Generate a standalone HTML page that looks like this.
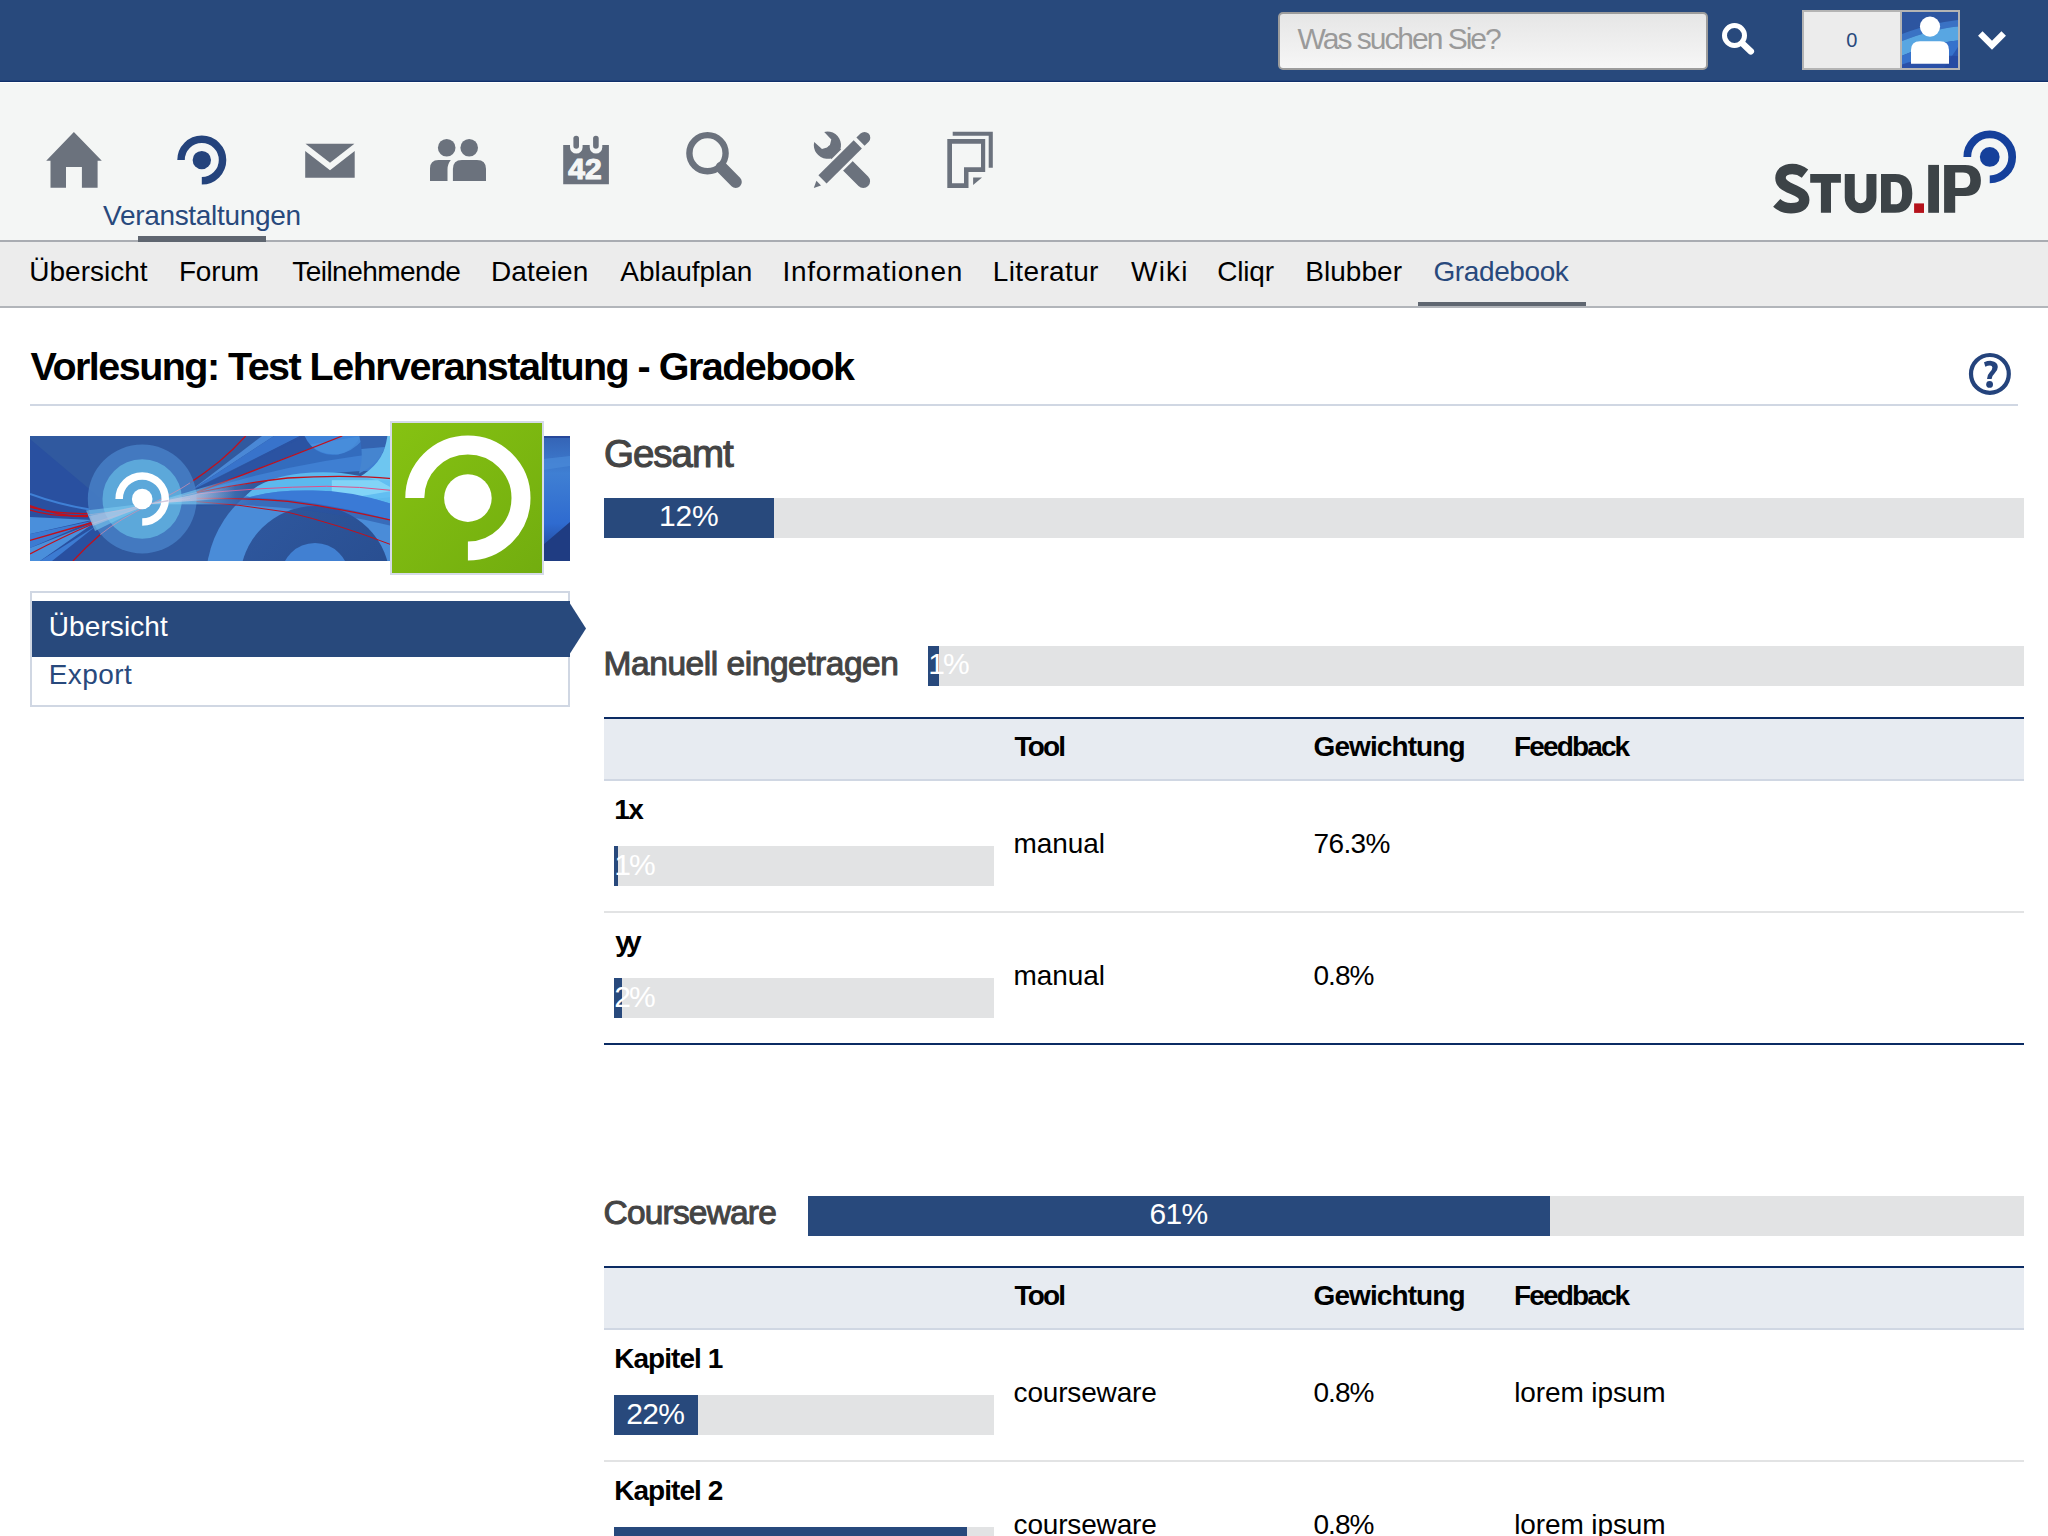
<!DOCTYPE html>
<html lang="de">
<head>
<meta charset="utf-8">
<title>Vorlesung: Test Lehrveranstaltung - Gradebook</title>
<style>
html,body{margin:0;padding:0;overflow:hidden;}
#page{position:absolute;left:0;top:0;width:2048px;height:1536px;overflow:hidden;background:#fff;}
body{width:2048px;height:1536px;overflow:hidden;position:relative;background:#fff;font-family:"Liberation Sans",sans-serif;}
.a{position:absolute;}
.t{position:absolute;line-height:1;white-space:nowrap;}
#topbar{left:0;top:0;width:2048px;height:80px;background:#28497c;}
#topline{left:0;top:80px;width:2048px;height:2px;background:linear-gradient(#21427a 0,#21427a 50%,#10306a 50%,#10306a 100%);}
#navbg{left:0;top:82px;width:2048px;height:158px;background:#f4f6f5;border-top:1px solid #fff;box-sizing:border-box;}
#navline{left:0;top:240px;width:2048px;height:2px;background:#a9acb2;}
#tabsbg{left:0;top:242px;width:2048px;height:64px;background:#ececec;}
#tabsline{left:0;top:306px;width:2048px;height:2px;background:#b2b5ba;}
#search{left:1278px;top:12px;width:430px;height:58px;box-sizing:border-box;border:2px solid #9c9c9c;border-radius:5px;background:linear-gradient(#e6e6e6,#f6f6f6);}
#notif{left:1802px;top:10px;width:158px;height:60px;box-sizing:border-box;border:2px solid #b4b4b4;background:#ececec;}
#notifdiv{left:1900px;top:12px;width:2px;height:56px;background:#b4b4b4;}
.ul{background:#5f6670;height:6px;}
#titleline{left:30px;top:404px;width:1988px;height:2px;background:#d0d7e3;}
#widget{left:30px;top:591px;width:540px;height:116px;box-sizing:border-box;border:2px solid #d0d7e3;background:#fff;}
#wactive{left:32px;top:601px;width:538px;height:56px;background:#28497c;}
.bar{background:#e2e3e4;height:40px;}
.fill{background:#28497c;height:40px;}
.thead{background:#e7ebf1;left:604px;width:1420px;}
.bl{background:#0b2b63;height:2px;left:604px;width:1420px;}
.hl{background:#d0d7e3;height:2px;left:604px;width:1420px;}
.rl{background:#e2e3e4;height:2px;left:604px;width:1420px;}
</style>
</head>
<body>
<div id="page">
<div class="a" id="topbar"></div>
<div class="a" id="topline"></div>
<div class="a" id="navbg"></div>
<div class="a" id="navline"></div>
<div class="a" id="tabsbg"></div>
<div class="a" id="tabsline"></div>
<div class="a" id="search"></div>
<div class="a" id="notif"></div>
<div class="a" id="notifdiv"></div>
<div class="a ul" style="left:138px;top:236px;width:128px;"></div>
<div class="a ul" style="left:1418px;top:302px;width:168px;height:4px;"></div>
<div class="a" id="titleline"></div>
<div class="a" id="widget"></div>
<div class="a" id="wactive"></div>

<!-- Gesamt -->
<div class="a bar" style="left:604px;top:498px;width:1420px;"></div>
<div class="a fill" style="left:604px;top:498px;width:170px;"></div>
<!-- Manuell -->
<div class="a bar" style="left:928px;top:646px;width:1096px;"></div>
<div class="a fill" style="left:928px;top:646px;width:11px;"></div>
<div class="a bl" style="top:717px;"></div>
<div class="a thead" style="top:719px;height:60px;"></div>
<div class="a hl" style="top:779px;"></div>
<div class="a bar" style="left:614px;top:846px;width:380px;"></div>
<div class="a fill" style="left:614px;top:846px;width:4px;"></div>
<div class="a rl" style="top:911px;"></div>
<div class="a bar" style="left:614px;top:978px;width:380px;"></div>
<div class="a fill" style="left:614px;top:978px;width:8px;"></div>
<div class="a bl" style="top:1043px;"></div>
<!-- Courseware -->
<div class="a bar" style="left:808px;top:1196px;width:1216px;"></div>
<div class="a fill" style="left:808px;top:1196px;width:742px;"></div>
<div class="a bl" style="top:1266px;"></div>
<div class="a thead" style="top:1268px;height:60px;"></div>
<div class="a hl" style="top:1328px;"></div>
<div class="a bar" style="left:614px;top:1395px;width:380px;"></div>
<div class="a fill" style="left:614px;top:1395px;width:84px;"></div>
<div class="a rl" style="top:1460px;"></div>
<div class="a bar" style="left:614px;top:1527px;width:380px;"></div>
<div class="a fill" style="left:614px;top:1527px;width:353px;"></div>

<svg class="a" style="left:30px;top:436px;" width="540" height="125" viewBox="30 436 540 125">
<defs>
<linearGradient id="gavg" x1="0" y1="0" x2="1" y2="1"><stop offset="0" stop-color="#86c212"/><stop offset="1" stop-color="#72ad0f"/></linearGradient>
<linearGradient id="gright" x1="0" y1="0" x2="0" y2="1"><stop offset="0" stop-color="#3463b5"/><stop offset=".3" stop-color="#3f7fd3"/><stop offset=".7" stop-color="#2f6bd0"/><stop offset="1" stop-color="#1f3f8a"/></linearGradient>
<linearGradient id="gdark" x1="0" y1="0" x2="1" y2="1"><stop offset="0" stop-color="#2f589f"/><stop offset="1" stop-color="#264a8a"/></linearGradient>
<linearGradient id="gbeam" gradientUnits="userSpaceOnUse" x1="152" y1="0" x2="252" y2="0"><stop offset="0" stop-color="#7ccaf0" stop-opacity=".8"/><stop offset=".45" stop-color="#7ccaf0" stop-opacity=".6"/><stop offset="1" stop-color="#5aa8e8" stop-opacity="0"/></linearGradient>
<linearGradient id="gbeam2" gradientUnits="userSpaceOnUse" x1="152" y1="0" x2="235" y2="0"><stop offset="0" stop-color="#dcd2e4" stop-opacity=".75"/><stop offset=".5" stop-color="#dcc8e0" stop-opacity=".55"/><stop offset="1" stop-color="#dcc8e0" stop-opacity="0"/></linearGradient>
<clipPath id="bclip"><rect x="30" y="436" width="540" height="125"/></clipPath>
</defs>
<g clip-path="url(#bclip)">
<rect x="30" y="436" width="540" height="125" fill="#30599f"/>
<!-- darker left-lower wedge -->
<path d="M30 439 Q62 466 100 498 L100 535 L73 561 L30 561 Z" fill="#2950a0"/>
<!-- big concentric circles bottom right -->
<circle cx="315" cy="580" r="109" fill="#4a8cd8"/>
<circle cx="315" cy="581" r="75" fill="url(#gdark)"/>
<circle cx="315" cy="577" r="34" fill="#4180d2"/>
<!-- fan of streaks to upper right -->
<path d="M190 491 L262 436 L274 436 Z" fill="#4a88d6"/>
<path d="M190 491 L274 436 L300 436 Z" fill="#3873cb"/>
<path d="M190 492 L300 436 L306 436 Z" fill="#2a52a3"/>
<path d="M190 492 L306 436 L342 436 L196 493 Z" fill="#2a52a3" opacity=".75"/>
<path d="M196 493 L342 436 L392 436 L392 452 Z" fill="#3570c6" opacity=".8"/>
<path d="M196 493 Q290 462 392 452 L392 470 Q290 472 196 494 Z" fill="#3f7fd2"/>
<!-- top circle -->
<circle cx="332.5" cy="424.7" r="30" fill="#3f83d8"/>
<path d="M310 444.5 L362 436 L362.5 440 Q352 452 338 454.4 Q320 455 310 444.5 Z" fill="#4a90dc" opacity=".8"/>
<!-- upper right shapes -->
<path d="M359.3 436 L387.4 436 Q386.5 442 385 447 L361.5 449 Q361 442 359.3 436 Z" fill="#3463b0"/>
<path d="M361.5 449 L385 447 Q379 464 359 473.5 Q362.5 461 361.5 449 Z" fill="#4585d0"/>
<path d="M387.4 436 L392 436 L392 481 L352 481 Q379 468 385 447 Q386.5 442 387.4 436 Z" fill="#6ec6f0"/>
<!-- light top of ring -->
<path d="M246 495.5 Q262 478 300 473.5 Q350 468 392 486 L392 504 Q350 490 310 490.5 Q275 490 250 497 Z" fill="#5cb9ee"/>
<path d="M331.8 480.3 L392 480.3 L392 497 L331.8 503.5 Z" fill="#62bef2"/>
<path d="M331.8 480.3 L378 480.3 L392 488 L392 491 L331.8 501 Z" fill="#88d8f8" opacity=".85"/>
<path d="M236 500 L250 497 Q275 490 310 490.5 Q350 490 392 504 L392 520.4 Q336 507.5 287.7 501.4 Q243 497.5 236 500 Z" fill="#3a7ad6"/>
<!-- mid band right of halo -->
<path d="M190 497 Q240 496 290 500 Q340 506 392 520 L392 526 Q320 508 240 505 L190 506 Z" fill="#2a52a3" opacity=".55"/>
<!-- left streaks -->
<path d="M30 494 Q60 505 90 509.5" fill="none" stroke="#3f80d6" stroke-width="2"/>
<path d="M92 520 L30 517 L30 534 Z" fill="#4a8fdb"/>
<path d="M92 521 L30 534 L30 548 Z" fill="#3c7bd2"/>
<path d="M94 523 L30 548 L30 561 L40 561 Z" fill="#4a8fdb"/>
<path d="M96 526 L40 561 L52 561 Z" fill="#3c7bd2"/>
<g fill="none" stroke="#c2101c" stroke-width="1.3">
<path d="M30 507 Q55 514 88 513.5"/>
<path d="M30 510 Q55 517.5 88 515.5"/>
<path d="M30 505.5 Q45 511 60 514 Q75 517 88 516.5"/>
<path d="M30 540.5 Q62 531 92.5 522.5"/>
<path d="M30 554 Q62 537 92.5 524"/>
<path d="M73 561 Q86 547 100.3 534.6"/>
<path d="M190 482.9 Q206 472 219.3 461.4 Q233 450 245.7 436"/>
<path d="M196.8 492.2 Q258 469.5 342.3 436"/>
<path d="M196.8 492.6 Q240 483.5 287.7 478 Q346 474.5 392 478.6"/>
<path d="M190 494.6 Q258 487.3 326.7 486.3 Q360 486.5 392 490.4" stroke="#e0508a" stroke-width="1"/>
<path d="M190 498.5 Q243 497.5 287.7 501.4 Q336 507.5 392 520.4"/>
<path d="M190 501 Q239 504 287.7 512.2 Q336 523.5 392 545" stroke-width="1"/>
</g>
<!-- halo circles -->
<circle cx="142.2" cy="499" r="54.4" fill="#477fc6" opacity=".85"/>
<circle cx="142.2" cy="499" r="39.7" fill="#5eaddc" opacity=".92"/>
<!-- faded lines across halo -->
<g fill="none" stroke="#d890b0" stroke-width="1" opacity=".7">
<path d="M100.3 534.6 Q118 520 152 503.4 Q175 493 190 482.9"/>
<path d="M88 515 Q120 512 152 503.4 L196.8 492.4"/>
<path d="M92.5 523.5 Q125 513 152 503.4 L190 498.5"/>
</g>
<!-- light beam through center -->
<path d="M86 510.5 L152 502.8 L95 531 Z" fill="#7ccaf0" opacity=".6"/>
<path d="M152 502.8 L252 473 L252 504.5 L152 504.2 Z" fill="url(#gbeam)"/>
<path d="M89 516 L152 503.2 L93 526 Z" fill="#d4cce2" opacity=".45"/>
<path d="M152 503.2 L235 486 L235 498 L152 503.8 Z" fill="url(#gbeam2)"/>
<!-- white logo -->
<path d="M119.15 499 A23.05 23.05 0 1 1 142.2 522.05" fill="none" stroke="#fff" stroke-width="7.5"/>
<circle cx="142.2" cy="499" r="10.3" fill="#fff"/>
<path d="M152 503.2 L168.5 499.8 L168.5 501.6 L152 503.8 Z" fill="#c8bcd6" opacity=".8"/>
<!-- right strip visible behind avatar -->
<rect x="543" y="436" width="27" height="125" fill="url(#gright)"/>
<path d="M543 438 L570 438 L570 436 L543 436 Z" fill="#27489a"/>
<path d="M543 459 L570 456 L570 466 L543 470 Z" fill="#4a8ad8" opacity=".7"/>
<path d="M543 545 L570 522 L570 561 L543 561 Z" fill="#1f3c82"/>
</g>
</svg>
<svg class="a" style="left:390px;top:421px;" width="154" height="154" viewBox="390 421 154 154">
<rect x="390" y="421" width="154" height="154" fill="#d5dbe8"/>
<rect x="392" y="423" width="150" height="150" fill="url(#gavg)"/>
<path d="M414.8 498 A53.1 53.1 0 1 1 467.9 551.1" fill="none" stroke="#fff" stroke-width="19"/>
<circle cx="467.9" cy="498.1" r="23.8" fill="#fff"/>
</svg>
<svg class="a" style="left:0;top:0;" width="2048" height="1536" viewBox="0 0 2048 1536">
<defs>
<clipPath id="avclip"><rect x="1902" y="12" width="56" height="56"/></clipPath>
</defs>
<!-- topbar search icon -->
<g fill="none" stroke="#fff">
<circle cx="1734.5" cy="35.5" r="10" stroke-width="5"/>
<line x1="1742.5" y1="43.5" x2="1750.8" y2="51.3" stroke-width="6.5" stroke-linecap="round"/>
</g>
<!-- user avatar -->
<g clip-path="url(#avclip)">
<rect x="1902" y="12" width="56" height="56" fill="#2d55a0"/>
<path d="M1902 34 C1920 27 1940 22 1958 20 L1958 26.5 C1940 28 1920 34 1902 41 Z" fill="#3a72c4"/>
<path d="M1902 41 C1920 34 1940 28 1958 26.5 L1958 40.5 C1940 42 1920 48 1902 55.7 Z" fill="#58a6e2"/>
<path d="M1902 55.7 C1920 48 1940 42 1958 40.5 L1958 68 L1902 68 Z" fill="#3672cc"/>
<path d="M1902 68 L1902 64.5 C1925 57 1945 55 1958 56 L1958 68 Z" fill="#2a50a8"/>
<path d="M1944 68 L1958 47 L1958 68 Z" fill="#2448a0" opacity=".6"/>
<circle cx="1930" cy="26.6" r="10.1" fill="#fff"/>
<path d="M1911 63.7 L1911 50 Q1911 41.2 1920 41.2 L1940 41.2 Q1949 41.2 1949 50 L1949 63.7 Z" fill="#fff"/>
</g>
<!-- chevron -->
<polyline points="1980.3,33.5 1992,45.2 2003.7,33.5" fill="none" stroke="#fff" stroke-width="6.4"/>

<!-- NAV ICONS -->
<g fill="#6b727d">
<!-- home -->
<path d="M73.9 132.1 L101.8 160.8 L97.6 160.8 L97.6 187.7 L81.9 187.7 L81.9 166.9 L66 166.9 L66 187.7 L50.5 187.7 L50.5 160.8 L46.2 160.8 Z"/>
<!-- mail -->
<path d="M305.5 143.8 L354.4 143.8 L330 162.8 Z"/>
<path d="M305.2 151 L330 170.2 L354.7 151 L354.7 177.8 L305.2 177.8 Z"/>
<!-- community -->
<circle cx="446.7" cy="147.8" r="8.8"/>
<circle cx="469.2" cy="147.8" r="8.8"/>
<path d="M430 181 L430 168.5 Q430 160 438.5 160 L450.8 160 Q447.5 164 447.5 169.5 L447.5 181 Z"/>
<path d="M452.9 181 L452.9 169 Q452.9 160 461.9 160 L477 160 Q486 160 486 169 L486 181 Z"/>
<!-- calendar -->
<path d="M563.2 145 L570 145 L570 147.2 A6.3 6.3 0 0 0 582.6 147.2 L582.6 145 L589.7 145 L589.7 147.2 A6.3 6.3 0 0 0 602.3 147.2 L602.3 145 L608.9 145 L608.9 184.2 L563.2 184.2 Z"/>
<rect x="573.4" y="135.8" width="5.6" height="13" rx="2.8"/>
<rect x="593.1" y="135.8" width="5.6" height="13" rx="2.8"/>
</g>
<text x="568.2" y="179.4" font-family="Liberation Sans, sans-serif" font-weight="700" font-size="30" fill="#f4f6f5" stroke="#f4f6f5" stroke-width="1.2" stroke-linejoin="round" textLength="33.4" lengthAdjust="spacingAndGlyphs">42</text>
<!-- search -->
<g fill="none" stroke="#6b727d">
<circle cx="707.5" cy="153.2" r="18.1" stroke-width="6.4"/>
<line x1="721.5" y1="167.5" x2="735.8" y2="182" stroke-width="12" stroke-linecap="round"/>
</g>
<!-- tools -->
<g fill="#6b727d">
<!-- wrench head + handle -->
<path d="M824.2 131.9 A13.6 13.6 0 1 1 814.2 141.9 L822 149 L829.5 146.8 L831.3 139.6 Z"/>
<line x1="833" y1="151" x2="863.3" y2="181.2" stroke="#6b727d" stroke-width="13.6" stroke-linecap="round"/>
<!-- pencil with halo -->
<line x1="818" y1="184" x2="864" y2="138.3" stroke="#f4f6f5" stroke-width="16.5" stroke-linecap="butt"/>
<line x1="822.5" y1="179.3" x2="857.8" y2="144.3" stroke="#6b727d" stroke-width="11.6"/>
<path d="M856.4 137.6 L860.5 133.5 A5.8 5.8 0 0 1 868.7 141.7 L864.6 145.8 Z"/>
<path d="M813.8 188 L816.4 180.8 L821 185.5 Z"/>
</g>
<!-- files -->
<g fill="#6b727d">
<path d="M952.7 131.7 L992.8 131.7 L992.8 167.8 L988.7 167.8 L988.7 135.8 L952.7 135.8 Z"/>
<path fill-rule="evenodd" d="M947.3 139.1 L985.2 139.1 L985.2 171.9 L968.5 171.9 L968.5 188 L947.3 188 Z M952 143.8 L952 183.3 L964 183.3 L964 167.2 L981 167.2 L981 143.8 Z"/>
<path d="M973.1 177.4 L982 177.4 L973.1 185 Z"/>
</g>
<!-- seminar (active) -->
<g>
<path d="M181.05 160.1 A20.75 20.75 0 1 1 201.8 180.85" fill="none" stroke="#24437c" stroke-width="7.5"/>
<circle cx="201.8" cy="160.1" r="9.2" fill="#24437c"/>
</g>

<!-- LOGO -->
<g fill="#3c4347">
<path d="M1805 173.6 C1801 170.5 1797.5 169 1792.3 169 C1784.5 169 1780.5 173 1780.5 178 C1780.5 183.5 1785 186 1792 189 C1799.5 192.2 1804.2 194.5 1804.2 200 C1804.2 205.5 1798.5 208.2 1791 208.2 C1785 208.2 1780.5 206.3 1776.7 202.8" fill="none" stroke="#3c4347" stroke-width="10.5"/>
<path d="M1810.2 174.1 L1840.9 174.1 L1840.9 182.7 L1831 182.7 L1831 212.7 L1820.9 212.7 L1820.9 182.7 L1810.2 182.7 Z"/>
<path d="M1849.75 174.1 L1849.75 197.5 A10.85 10.85 0 0 0 1871.45 197.5 L1871.45 174.1" fill="none" stroke="#3c4347" stroke-width="10"/>
<path fill-rule="evenodd" d="M1881 174.1 L1895 174.1 C1907 174.1 1912.3 181 1912.3 193.4 C1912.3 205.8 1907 212.7 1895 212.7 L1881 212.7 Z M1890.8 181.9 L1890.8 204.3 L1895 204.3 C1900 204.3 1902.1 201 1902.1 193.2 C1902.1 185.5 1900 181.9 1895 181.9 Z"/>
<rect x="1928.2" y="164.9" width="10.8" height="47.9"/>
<path fill-rule="evenodd" d="M1944.1 164.9 L1965 164.9 C1976 164.9 1980.9 171 1980.9 180.4 C1980.9 190 1976 196 1965 196 L1955.2 196 L1955.2 212.8 L1944.1 212.8 Z M1955.2 172.6 L1955.2 188 L1963 188 C1968.5 188 1970.3 185 1970.3 180.3 C1970.3 175.5 1968.5 172.6 1963 172.6 Z"/>
</g>
<rect x="1914.1" y="203.4" width="9.9" height="9.5" fill="#b5121b"/>
<path d="M1967.3 156.9 A22.45 22.45 0 1 1 1989.75 179.35" fill="none" stroke="#15409b" stroke-width="7.7"/>
<circle cx="1989.75" cy="156.9" r="9.9" fill="#15409b"/>

<!-- help icon -->
<circle cx="1989.9" cy="373.9" r="18.9" fill="none" stroke="#24437c" stroke-width="4.2"/>
<path d="M1984 362.3 Q1988 360.6 1991.5 360.9 Q1997.8 361.6 1997.8 367 Q1997.8 370.5 1994.5 373.4 Q1991.8 375.8 1991.6 379 L1987 379 Q1987 375 1989.8 372.2 Q1992.6 369.3 1992.4 367.6 Q1992.2 365.4 1990 365.4 Q1987.8 365.4 1985.3 366.8 Z" fill="#24437c"/>
<circle cx="1989.6" cy="384.4" r="3.4" fill="#24437c"/>

<!-- sidebar arrow -->
<path d="M570 603.4 L586 628.4 L570 653.4 Z" fill="#28497c"/>
</svg>


<div class="t" style="left:1297.60px;top:24.11px;font-size:30px;color:#9a9a9a;letter-spacing:-2.018px;">Was suchen Sie?</div>
<div class="t" style="left:1846.20px;top:29.57px;font-size:20px;color:#28497c;">0</div>
<div class="t" style="left:103.10px;top:201.80px;font-size:28px;color:#28497c;letter-spacing:-0.322px;">Veranstaltungen</div>
<div class="t" style="left:29.30px;top:257.80px;font-size:28px;color:#000;letter-spacing:-0.010px;">Übersicht</div>
<div class="t" style="left:178.90px;top:257.80px;font-size:28px;color:#000;letter-spacing:-0.168px;">Forum</div>
<div class="t" style="left:292.20px;top:257.80px;font-size:28px;color:#000;letter-spacing:-0.525px;">Teilnehmende</div>
<div class="t" style="left:491.00px;top:257.80px;font-size:28px;color:#000;letter-spacing:0.127px;">Dateien</div>
<div class="t" style="left:620.30px;top:257.80px;font-size:28px;color:#000;letter-spacing:-0.029px;">Ablaufplan</div>
<div class="t" style="left:782.40px;top:257.80px;font-size:28px;color:#000;letter-spacing:0.722px;">Informationen</div>
<div class="t" style="left:992.80px;top:257.80px;font-size:28px;color:#000;letter-spacing:0.363px;">Literatur</div>
<div class="t" style="left:1131.00px;top:257.80px;font-size:28px;color:#000;letter-spacing:1.217px;">Wiki</div>
<div class="t" style="left:1217.30px;top:257.80px;font-size:28px;color:#000;letter-spacing:-0.209px;">Cliqr</div>
<div class="t" style="left:1305.30px;top:257.80px;font-size:28px;color:#000;letter-spacing:0.036px;">Blubber</div>
<div class="t" style="left:1433.50px;top:257.80px;font-size:28px;color:#28497c;letter-spacing:-0.405px;">Gradebook</div>
<div class="t" style="left:30.50px;top:346.96px;font-size:39.5px;color:#000;font-weight:700;letter-spacing:-1.531px;">Vorlesung: Test Lehrveranstaltung - Gradebook</div>
<div class="t" style="left:48.80px;top:613.30px;font-size:28px;color:#fff;letter-spacing:0.090px;">Übersicht</div>
<div class="t" style="left:48.80px;top:661.10px;font-size:28px;color:#28497c;letter-spacing:0.391px;">Export</div>
<div class="t" style="left:604.00px;top:435.01px;font-size:38.5px;color:#444;letter-spacing:-0.998px;-webkit-text-stroke:1.1px #444;">Gesamt</div>
<div class="t" style="left:659.00px;top:501.31px;font-size:30px;color:#fff;letter-spacing:-0.185px;">12%</div>
<div class="t" style="left:603.60px;top:646.64px;font-size:33.5px;color:#444;letter-spacing:-0.458px;-webkit-text-stroke:1px #444;">Manuell eingetragen</div>
<div class="t" style="left:928.30px;top:649.31px;font-size:30px;color:#fff;letter-spacing:-1.985px;">1%</div>
<div class="t" style="left:1014.60px;top:732.80px;font-size:28px;color:#000;font-weight:700;letter-spacing:-1.844px;">Tool</div>
<div class="t" style="left:1313.50px;top:732.80px;font-size:28px;color:#000;font-weight:700;letter-spacing:-0.902px;">Gewichtung</div>
<div class="t" style="left:1514.00px;top:732.80px;font-size:28px;color:#000;font-weight:700;letter-spacing:-1.857px;">Feedback</div>
<div class="t" style="left:614.20px;top:795.50px;font-size:28px;color:#000;font-weight:700;letter-spacing:-1.472px;">1x</div>
<div class="t" style="left:614.30px;top:849.61px;font-size:30px;color:#fff;letter-spacing:-1.985px;">1%</div>
<div class="t" style="left:1013.60px;top:830.10px;font-size:28px;color:#000;letter-spacing:-0.083px;">manual</div>
<div class="t" style="left:1313.50px;top:829.60px;font-size:28px;color:#000;letter-spacing:-0.624px;">76.3%</div>
<div class="t" style="left:615.20px;top:927.50px;font-size:28px;color:#000;font-weight:700;letter-spacing:-4.772px;">yy</div>
<div class="t" style="left:614.30px;top:981.61px;font-size:30px;color:#fff;letter-spacing:-1.985px;">2%</div>
<div class="t" style="left:1013.60px;top:962.10px;font-size:28px;color:#000;letter-spacing:-0.083px;">manual</div>
<div class="t" style="left:1313.50px;top:961.60px;font-size:28px;color:#000;letter-spacing:-0.975px;">0.8%</div>
<div class="t" style="left:603.60px;top:1196.24px;font-size:33.5px;color:#444;letter-spacing:-0.819px;-webkit-text-stroke:1px #444;">Courseware</div>
<div class="t" style="left:1149.50px;top:1199.31px;font-size:30px;color:#fff;letter-spacing:-0.685px;">61%</div>
<div class="t" style="left:1014.60px;top:1281.80px;font-size:28px;color:#000;font-weight:700;letter-spacing:-1.844px;">Tool</div>
<div class="t" style="left:1313.50px;top:1281.80px;font-size:28px;color:#000;font-weight:700;letter-spacing:-0.902px;">Gewichtung</div>
<div class="t" style="left:1514.00px;top:1281.80px;font-size:28px;color:#000;font-weight:700;letter-spacing:-1.857px;">Feedback</div>
<div class="t" style="left:614.20px;top:1344.50px;font-size:28px;color:#000;font-weight:700;letter-spacing:-0.954px;">Kapitel 1</div>
<div class="t" style="left:626.30px;top:1398.61px;font-size:30px;color:#fff;letter-spacing:-0.685px;">22%</div>
<div class="t" style="left:1013.60px;top:1379.10px;font-size:28px;color:#000;letter-spacing:-0.173px;">courseware</div>
<div class="t" style="left:1313.50px;top:1378.60px;font-size:28px;color:#000;letter-spacing:-0.975px;">0.8%</div>
<div class="t" style="left:1514.20px;top:1378.60px;font-size:28px;color:#000;letter-spacing:-0.106px;">lorem ipsum</div>
<div class="t" style="left:614.20px;top:1476.50px;font-size:28px;color:#000;font-weight:700;letter-spacing:-0.954px;">Kapitel 2</div>
<div class="t" style="left:761.20px;top:1530.61px;font-size:30px;color:#fff;letter-spacing:-0.685px;">93%</div>
<div class="t" style="left:1013.60px;top:1511.10px;font-size:28px;color:#000;letter-spacing:-0.173px;">courseware</div>
<div class="t" style="left:1313.50px;top:1510.60px;font-size:28px;color:#000;letter-spacing:-0.975px;">0.8%</div>
<div class="t" style="left:1514.20px;top:1510.60px;font-size:28px;color:#000;letter-spacing:-0.106px;">lorem ipsum</div>
</div>
</body>
</html>
